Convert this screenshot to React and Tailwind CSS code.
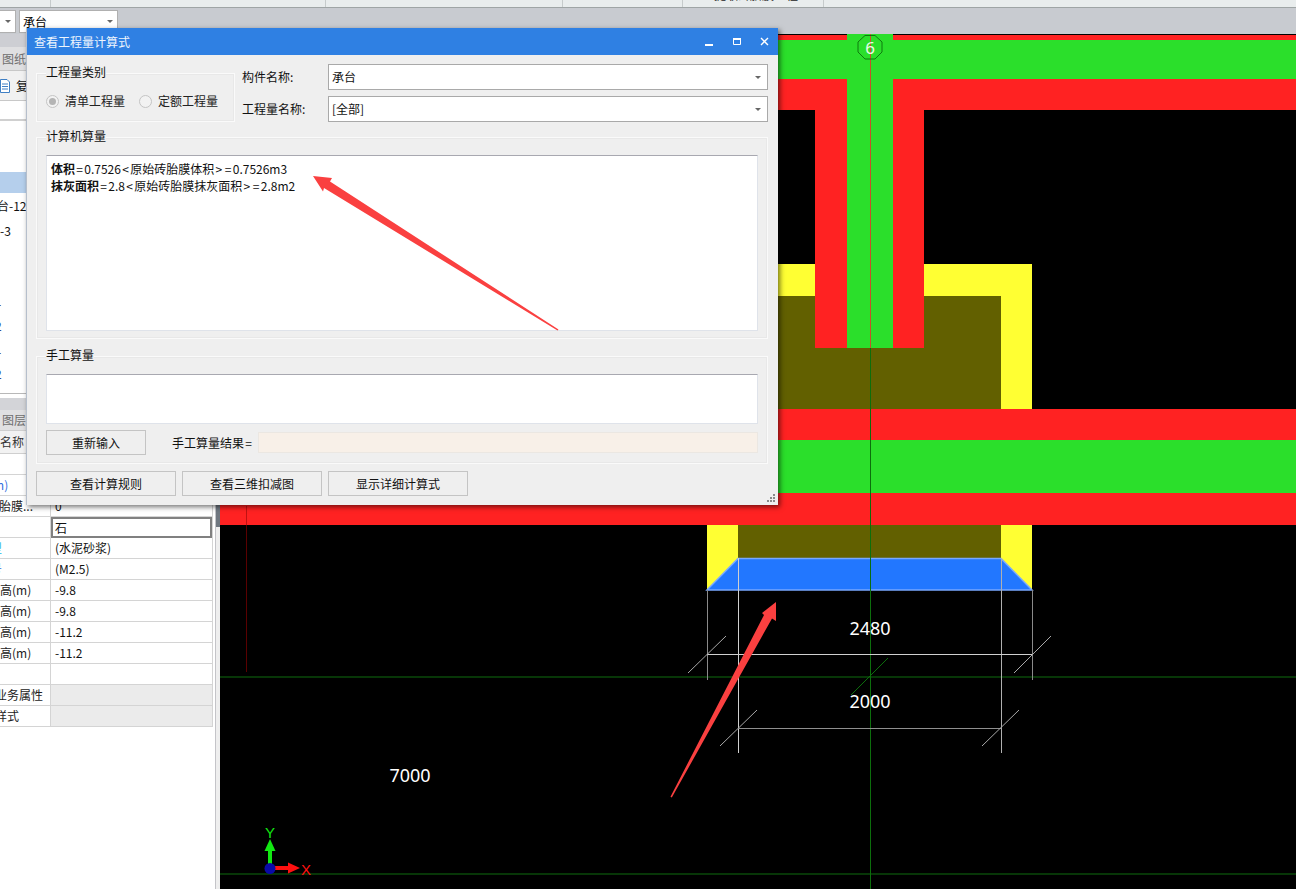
const font = { fontFamily: '"Noto Sans CJK SC", "Noto Sans", sans-serif' };

const topCells = [
  { w: "w-[51px]", text: "" },
  { w: "w-[275px]", text: "" },
  { w: "w-[237px]", text: "" },
  { w: "w-[120px]", text: "工" },
  { w: "w-[141px] pl-[6px]", text: "提取砖胎膜工程" },
];

const propRows = [
  { name: "(m)", value: "", nameClass: "-ml-[11px] text-[#2f6fe0]" },
  { name: "砖胎膜...", value: "0", nameClass: "-ml-[13px]" },
  { name: "", value: "石", selected: true },
  { name: "类型", value: "(水泥砂浆)", nameClass: "-ml-[22px] text-[#22b8e8]" },
  { name: "标号", value: "(M2.5)", nameClass: "-ml-[22px] text-[#2f6fe0]" },
  { name: "顶标高(m)", value: "-9.8", nameClass: "-ml-[24px]" },
  { name: "顶标高(m)", value: "-9.8", nameClass: "-ml-[24px]" },
  { name: "底标高(m)", value: "-11.2", nameClass: "-ml-[24px]" },
  { name: "底标高(m)", value: "-11.2", nameClass: "-ml-[24px]" },
  { name: "", value: "" },
  { name: "其它业务属性", value: "", nameClass: "-ml-[29px]", grey: true },
  { name: "显示样式", value: "", nameClass: "-ml-[29px]", grey: true },
];

function Sym({ children }) {
  return <span className="mx-[1.3px]">{children}</span>;
}

function Caret() {
  return (
    <svg width="6" height="3" viewBox="0 0 6 3" className="shrink-0">
      <path d="M0 0H6L3 3Z" fill="#666" />
    </svg>
  );
}

function ComboField({ text }) {
  return (
    <div className="w-[440px] h-[26px] bg-white border border-[#a9a9a9] flex items-center justify-between pl-[3px] pr-[6px]">
      <span>{text}</span>
      <Caret />
    </div>
  );
}

function Radio({ checked, label }) {
  return (
    <div className="flex items-center gap-[6px]">
      <span className="w-[13px] h-[13px] rounded-full border border-[#c4c4c4] bg-[#f2f2f2] flex items-center justify-center">
        {checked && <span className="w-[7px] h-[7px] rounded-full bg-[#b4b4b4]" />}
      </span>
      <span>{label}</span>
    </div>
  );
}

function Group({ title, className, children }) {
  return (
    <div className={`border border-[#fafafa] outline outline-[#e8e8e8] -outline-offset-2 ${className}`}>
      <div className="-mt-[10px] mb-[10px] w-fit h-[17px] leading-[15px] bg-[#efefef] relative">{title}</div>
      {children}
    </div>
  );
}

function FlatButton({ width, children }) {
  return (
    <div className={`${width} h-[25px] border border-[#c4c4c4] bg-[#efefef] flex items-center justify-center`}>
      {children}
    </div>
  );
}

function CalcDialog() {
  return (
    <div
      className="absolute left-[26px] top-[28px] w-[752px] h-[477px] flex flex-col bg-[#efefef] text-[12px] leading-[16px] text-[#111] border-l border-[#b6bfcc] shadow-[2px_2px_5px_rgba(0,0,0,0.55)]"
      style={font}
    >
      <div className="h-[27px] bg-[#2f80e3] text-white flex items-center justify-between pl-[7px] pr-[9px] shrink-0">
        <span className="text-[#eef5fd]">查看工程量计算式</span>
        <svg width="64" height="10" viewBox="0 0 64 10">
          <rect x="0" y="7" width="8" height="2" fill="#fff" />
          <path d="M28.5 1.5H35.5V7.5H28.5Z" fill="none" stroke="#fff" />
          <rect x="28" y="1" width="8" height="2" fill="#fff" />
          <path d="M56 1L63 8M63 1L56 8" stroke="#fff" strokeWidth="1.4" />
        </svg>
      </div>

      <div className="flex-1 relative px-[9px]">
        <div className="flex items-start pt-[9px]">
          <Group title={<span>工程量类别</span>} className="w-[199px] h-[49px] mt-[9px] pl-[9px]">
            <div className="flex items-center gap-[14px] mt-[12px] text-[#222]">
              <Radio checked label="清单工程量" />
              <Radio label="定额工程量" />
            </div>
          </Group>
          <div className="ml-[7px] flex flex-col gap-[6px]">
            <div className="flex items-center">
              <span className="w-[86px]">构件名称:</span>
              <ComboField text="承台" />
            </div>
            <div className="flex items-center">
              <span className="w-[86px]">工程量名称:</span>
              <ComboField text="[全部]" />
            </div>
          </div>
        </div>

        <Group title="计算机算量" className="mt-[15px] w-[732px] h-[202px] px-[9px]">
          <div className="h-[176px] bg-white border border-[#dfe3ea] border-t-[#a8a8b0] pl-[4px] pt-[4px] leading-[17px]">
            <div>
              <b>体积</b>
              <Sym>=</Sym>0.7526<Sym>&lt;</Sym>原始砖胎膜体积<Sym>&gt;</Sym>
              <Sym>=</Sym>0.7526m3
            </div>
            <div>
              <b>抹灰面积</b>
              <Sym>=</Sym>2.8<Sym>&lt;</Sym>原始砖胎膜抹灰面积<Sym>&gt;</Sym>
              <Sym>=</Sym>2.8m2
            </div>
          </div>
        </Group>

        <Group title="手工算量" className="mt-[17px] w-[732px] h-[108px] px-[9px]">
          <div className="h-[50px] bg-white border border-[#dfe3ea] border-t-[#a8a8b0]" />
          <div className="flex items-center mt-[6px]">
            <FlatButton width="w-[100px]">重新输入</FlatButton>
            <span className="ml-[26px] w-[86px]">
              手工算量结果<Sym>=</Sym>
            </span>
            <div className="w-[500px] h-[21px] bg-[#f8f0e8] border border-[#ebe7e2]" />
          </div>
        </Group>

        <div className="flex gap-[6px] mt-[7px]">
          <FlatButton width="w-[140px]">查看计算规则</FlatButton>
          <FlatButton width="w-[140px]">查看三维扣减图</FlatButton>
          <FlatButton width="w-[140px]">显示详细计算式</FlatButton>
        </div>

        <svg width="9" height="9" viewBox="0 0 9 9" className="absolute right-[3px] bottom-[3px]">
          <path d="M7 1h2v2H7zM4 4h2v2H4zM7 4h2v2H7zM1 7h2v2H1zM4 7h2v2H4zM7 7h2v2H7z" fill="#8a8a8a" />
        </svg>
      </div>
    </div>
  );
}

function LeftPanel() {
  return (
    <div className="w-[220px] shrink-0 bg-white flex text-[12px] text-[#111]">
      <div className="w-[215px] flex flex-col">
        <div className="h-[13px] bg-[#cdced3]" />
        <div className="h-[23px] bg-[#dfdfe1] flex items-center pl-[2px] text-[#6e6e6e]">图纸管理</div>
        <div className="h-[31px] bg-[#f1f1f1] border-t border-b border-[#c8c8c8] flex items-center gap-[6px] whitespace-nowrap">
          <svg width="10" height="14" viewBox="0 0 10 14" className="shrink-0">
            <path d="M0.5 0.5H7L9.5 3V13.5H0.5Z" fill="#fff" stroke="#3f7fc4" />
            <path d="M2 5H8M2 7.5H8M2 10H8" stroke="#3f7fc4" />
          </svg>
          <span>复制</span>
        </div>
        <div className="h-[20px] border-b-2 border-[#d0d0d0]" />
        <div className="h-[51px]" />
        <div className="h-[21px] bg-[#b5cfec]" />
        <div className="h-[22px] -ml-[3px] flex items-end whitespace-nowrap">台-12</div>
        <div className="h-[25px] flex items-end whitespace-nowrap">-3</div>
        <div className="h-[73px] -ml-[3px] flex items-end">-</div>
        <div className="h-[22px] -ml-[5px] flex items-end text-[#2a4a90]">2</div>
        <div className="h-[26px] -ml-[3px] flex items-end">-</div>
        <div className="h-[22px] -ml-[5px] flex items-end text-[#2a4a90]">2</div>
        <div className="h-[11px] border-b border-[#b8b8b8]" />
        <div className="h-[4px]" />
        <div className="h-[12px] bg-[#d3d4d8]" />
        <div className="h-[20px] bg-[#e0e0e2] flex items-center pl-[2px] text-[#6e6e6e]">图层管理</div>
        <div className="h-[24px] bg-[#f2f2f2] border-t border-b border-[#cfcfcf] flex items-center text-[#333] whitespace-nowrap">
          名称
        </div>
        <div className="h-[21px] border-b border-[#d4d4d4] w-[213px]" />
        <div className="w-[213px] flex flex-col">
          {propRows.map((row, i) => (
            <div key={i} className="h-[21px] flex border-b border-[#d4d4d4] border-r">
              <div className="w-[51px] shrink-0 border-r border-[#d4d4d4] overflow-hidden whitespace-nowrap leading-[20px] text-[#222]">
                <div className={row.nameClass}>{row.name}</div>
              </div>
              <div
                className={`flex-1 whitespace-nowrap ${
                  row.selected
                    ? "border-2 border-[#808080] bg-white pl-[2px] h-[21px] leading-[17px]"
                    : "pl-[4px] leading-[20px]"
                } ${row.grey ? "bg-[#ebebeb]" : ""}`}
              >
                {row.value}
              </div>
            </div>
          ))}
        </div>
      </div>
      <div className="w-[1px] bg-[#c4c4c8]" />
      <div className="w-[4px] bg-[#eeeeee] flex flex-col">
        <div className="h-[493px] bg-[#6f7780]" />
      </div>
    </div>
  );
}

function Drawing() {
  return (
    <svg width="1076" height="855" viewBox="220 34 1076 855" className="block" style={font}>
      <rect x="220" y="34" width="1076" height="855" fill="#000" />
      {/* upper beam */}
      <rect x="778" y="35" width="518" height="5" fill="#ff2222" />
      <rect x="778" y="40" width="518" height="39" fill="#2bdf2b" />
      <rect x="778" y="79" width="518" height="31" fill="#ff2222" />
      {/* yellow pit */}
      <rect x="700" y="264" width="332" height="145" fill="#ffff33" />
      <rect x="700" y="296" width="301" height="113" fill="#626000" />
      {/* column */}
      <rect x="815" y="110" width="109" height="238" fill="#ff2222" />
      <rect x="847" y="34" width="46" height="314" fill="#2bdf2b" />
      {/* lower beam */}
      <rect x="220" y="409" width="1076" height="31" fill="#ff2222" />
      <rect x="220" y="440" width="1076" height="53" fill="#2bdf2b" />
      <rect x="220" y="493" width="1076" height="32" fill="#ff2222" />
      {/* section under the beam */}
      <rect x="707" y="525" width="325" height="65" fill="#ffff33" />
      <rect x="738" y="525" width="263" height="33" fill="#626000" />
      <path d="M738 558.5H1001L1032 590H707Z" fill="#2277ff" stroke="#78a8ff" strokeWidth="1.5" />

      {/* grid lines */}
      <path d="M220 677H1296M220 874H1296" stroke="#0a480a" strokeWidth="1.4" />
      <path d="M870.5 34V348" stroke="#c8502a" />
      <path d="M870.5 348V889" stroke="#0c6e0c" />
      <path d="M246.5 506V525" stroke="#c01212" />
      <path d="M246.5 525V672" stroke="#5a0000" />
      <path d="M851 695L888 658" stroke="#0c6e0c" />

      {/* dimensions */}
      <g fill="none">
        <path d="M707.5 590V680M1032.5 590V680" stroke="#8a8a8a" />
        <path d="M738.5 558V753" stroke="#d0d0d0" />
        <path d="M1001.5 558V753" stroke="#b0b0b0" />
        <path d="M707 654.5H1032" stroke="#d0d0d0" />
        <path d="M738 728.5H1001" stroke="#8f8f8f" />
        <path d="M688 673L726 636M1014 673L1051 636M720 746L757 710M982 746L1019 710" stroke="#a8a8a8" />
      </g>
      <g fill="#fff" fontSize="18" textAnchor="middle" style={{ fontFamily: '"Noto Sans", sans-serif' }}>
        <text x="870" y="635">2480</text>
        <text x="870" y="708">2000</text>
        <text x="410" y="782">7000</text>
      </g>

      {/* axis bubble */}
      <path
        d="M865 35.5H875L882 42V52L875 59H865L858 52V42Z"
        fill="none"
        stroke="#0f7a0f"
      />
      <text x="870" y="53.5" fill="#eafbe8" fontSize="17" textAnchor="middle" style={{ fontFamily: '"Noto Sans", sans-serif' }}>
        6
      </text>

      {/* coordinate marker */}
      <rect x="268" y="850" width="4" height="16" fill="#12e812" />
      <path d="M270 839L275.5 851H264.5Z" fill="#12e812" />
      <rect x="274" y="866" width="15" height="4" fill="#ff1010" />
      <path d="M288 862.5L300 868L288 873.5Z" fill="#ff1010" />
      <circle cx="270" cy="868.5" r="5.5" fill="#0a0aa8" />
      <text x="270" y="838" fill="#12e812" fontSize="15" textAnchor="middle" style={{ fontFamily: '"Liberation Sans", sans-serif' }}>
        Y
      </text>
      <text x="306" y="875" fill="#ff1010" fontSize="15" textAnchor="middle" style={{ fontFamily: '"Liberation Sans", sans-serif' }}>
        X
      </text>
    </svg>
  );
}

export default function App() {
  return (
    <div className="relative w-[1296px] h-[889px] overflow-hidden bg-white text-[12px]" style={font}>
      <div className="h-[8px] bg-[#e9eded] border-b border-[#9fa5a5] flex overflow-hidden">
        {topCells.map((cell, i) => (
          <div key={i} className={`${cell.w} h-[7px] border-r border-[#c6cbcb] overflow-hidden`}>
            <div className="-mt-[13px] leading-[16px] text-center whitespace-nowrap text-[#222]">{cell.text}</div>
          </div>
        ))}
      </div>
      <div className="h-[26px] bg-[#c8cbd0] flex items-start gap-[3px] pt-[2px]">
        <div className="w-[16px] h-[23px] bg-white border border-[#b0b0b0] border-l-0 flex items-center justify-end pr-[4px]">
          <Caret />
        </div>
        <div className="w-[99px] h-[23px] bg-white border border-[#b0b0b0] flex items-center justify-between pl-[3px] pr-[4px]">
          <span>承台</span>
          <Caret />
        </div>
      </div>

      <div className="flex h-[855px]">
        <LeftPanel />
        <Drawing />
      </div>

      <CalcDialog />

      {/* red annotation arrows */}
      <svg width="1296" height="889" viewBox="0 0 1296 889" className="absolute left-0 top-0 pointer-events-none">
        <path d="M313 176L332 178L330 181.5L558.5 329.5L557.5 330.5L324 188L323 191.5Z" fill="#fa4040" />
        <path d="M776 602L776 621L772 618.5L671.8 797.5L670.5 796.8L764 615L762 613Z" fill="#fa4040" />
      </svg>
    </div>
  );
}
